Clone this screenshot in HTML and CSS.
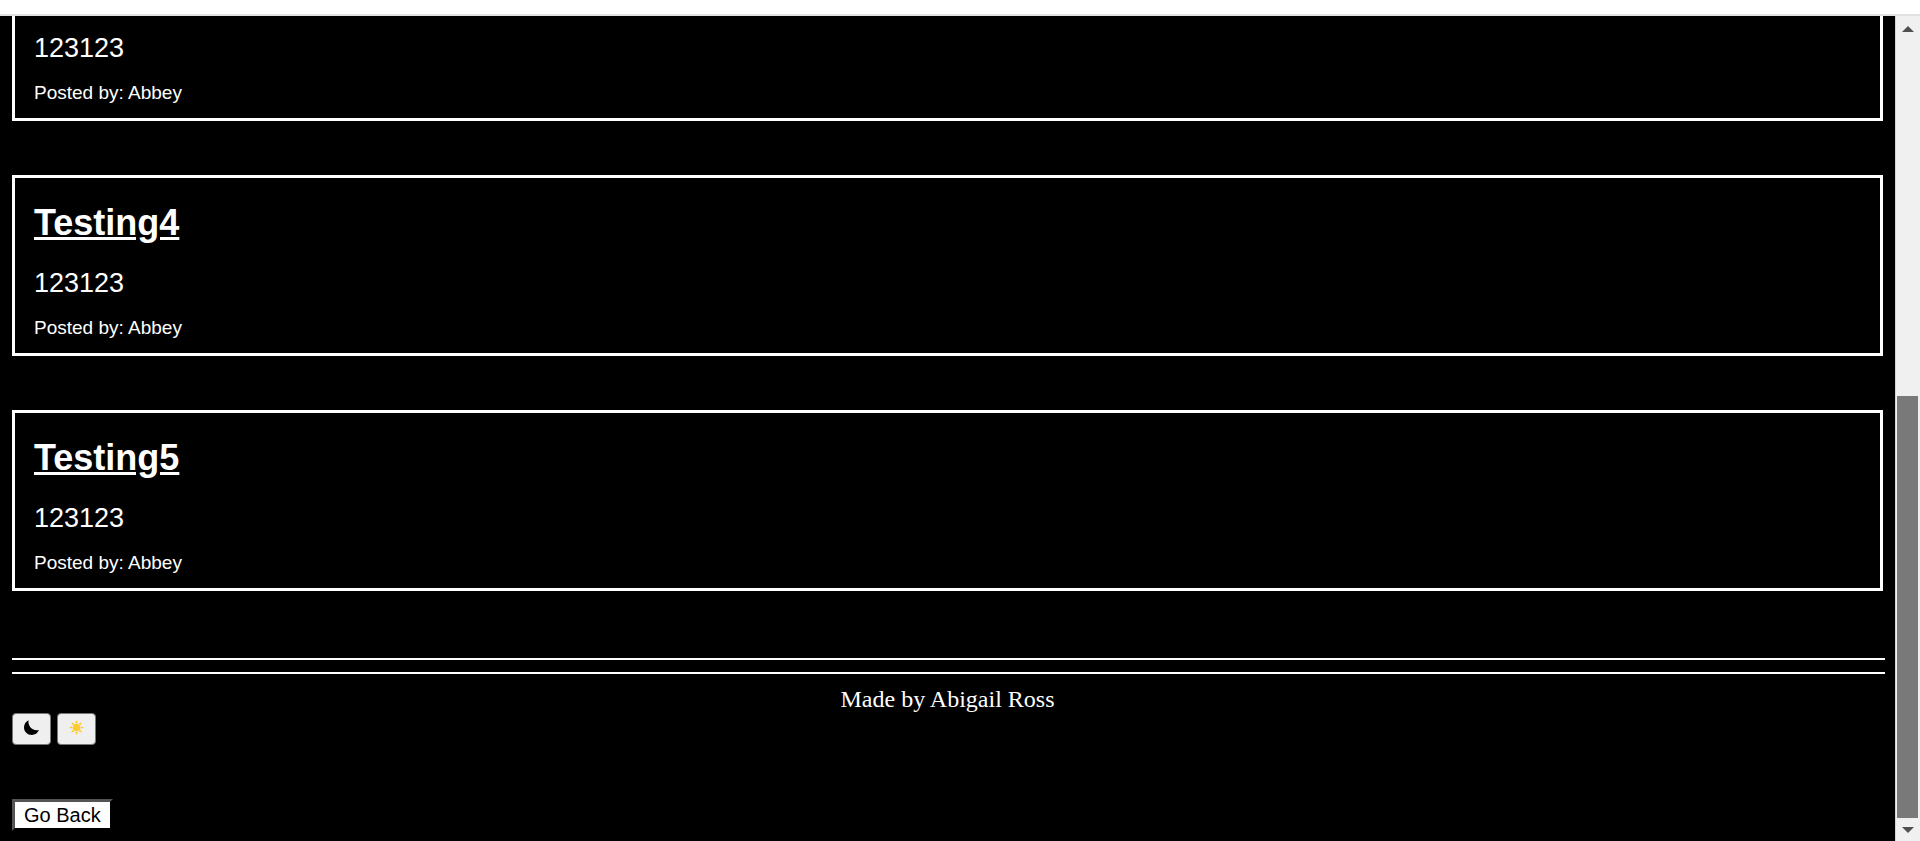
FILE: index.html
```
<!DOCTYPE html>
<html lang="en">
<head>
<meta charset="utf-8">
<title>Posts</title>
<link rel="stylesheet" href="styles.css">
</head>
<body>
<div class="topbar"></div>
<div class="viewport">
  <div class="content">
    <main class="posts">
      <article class="post post-cut">
        <p class="post-body">123123</p>
        <p class="post-author">Posted by: Abbey</p>
      </article>
      <article class="post">
        <h2 class="post-title">Testing4</h2>
        <p class="post-body">123123</p>
        <p class="post-author">Posted by: Abbey</p>
      </article>
      <article class="post">
        <h2 class="post-title">Testing5</h2>
        <p class="post-body">123123</p>
        <p class="post-author">Posted by: Abbey</p>
      </article>
    </main>
    <hr class="rule">
    <hr class="rule">
    <footer class="footer">Made by Abigail Ross</footer>
    <div class="themes">
      <button class="theme" type="button" aria-label="Dark mode">
        <svg width="17" height="17" viewBox="0 0 17 17"><path d="M5.600 1.200C4.600 6 8.400 12.400 16 11.100C14.700 14.300 12 16 8.800 16C4.500 16 1 12.700 1 8.500C1 5.100 2.800 2.300 5.600 1.200Z" fill="#000"/></svg>
      </button>
      <button class="theme" type="button" aria-label="Light mode">
        <svg width="17" height="17" viewBox="-8.500 -8.500 17 17" fill="#fdcb2e">
          <circle r="3.800"/>
          <path id="ray" d="M-1.300-4.400L0-7.400L1.300-4.400Z"/>
          <use href="#ray" transform="rotate(45)"/><use href="#ray" transform="rotate(90)"/><use href="#ray" transform="rotate(135)"/><use href="#ray" transform="rotate(180)"/><use href="#ray" transform="rotate(225)"/><use href="#ray" transform="rotate(270)"/><use href="#ray" transform="rotate(315)"/>
        </svg>
      </button>
    </div>
    <button class="back" type="button">Go Back</button>
  </div>
  <div class="scrollbar" aria-hidden="true">
    <svg class="arrow" width="12" height="6" viewBox="0 0 12 6"><path d="M0 6L6 0L12 6Z"/></svg>
    <div class="track"><div class="thumb"></div></div>
    <svg class="arrow" width="12" height="6" viewBox="0 0 12 6"><path d="M0 0L6 6L12 0Z"/></svg>
  </div>
</div>
</body>
</html>
```
FILE: styles.css
```
* { box-sizing: border-box; }
body {
  margin: 0;
  min-height: 100vh;
  display: flex;
  flex-direction: column;
  background: #000;
  color: #fff;
  font-family: "Liberation Sans", Arial, sans-serif;
}
.topbar {
  height: 16px;
  background: #fff;
  border-bottom: 2px solid #dfe1e3;
}
.viewport { flex: 1; display: flex; }
.content { flex: 1; padding: 0 10px 9px 12px; }
.posts {
  display: flex;
  flex-direction: column;
  gap: 54px;
  margin: 0 2px 67px 0;
}
.post {
  border: 3px solid #fff;
  padding: 25px 19px 14px;
}
.post-cut { border-top: 0; padding-top: 17px; }
.post-title {
  margin: 0 0 25px;
  font-size: 36px;
  line-height: 40px;
  text-decoration: underline;
}
.post-body { margin: 0 0 19px; font-size: 27px; line-height: 30px; }
.post-author { margin: 0; font-size: 19px; line-height: 22px; }
.rule {
  height: 2px;
  margin: 0 0 12px;
  border: 0;
  background: #fff;
}
.footer {
  text-align: center;
  font-family: "Liberation Serif", "Times New Roman", serif;
  font-size: 24px;
  line-height: 27px;
  margin-right: 2px;
}
.themes { display: flex; gap: 6px; margin-bottom: 54px; }
.theme {
  width: 39px;
  height: 32px;
  padding: 0 0 3px;
  display: flex;
  align-items: center;
  justify-content: center;
  background: #efefef;
  border: 1px solid #767676;
  border-radius: 4px;
}
.back {
  display: block;
  padding: 1px 9px;
  border: 3px outset #000;
  background: #fff;
  color: #000;
  font: 20px/24px "Liberation Sans", Arial, sans-serif;
}
.scrollbar {
  width: 25px;
  display: flex;
  flex-direction: column;
  align-items: center;
  padding: 10px 0 8px;
  background: #f0f0f0;
  border-left: 1px solid #d4d4d4;
}
.arrow { fill: #505050; margin-right: 1px; }
.track {
  flex: 1;
  align-self: stretch;
  display: flex;
  flex-direction: column;
  justify-content: flex-end;
  padding: 9px 2px 9px 1px;
}
.thumb { height: 54.3%; background: #797979; }
```
